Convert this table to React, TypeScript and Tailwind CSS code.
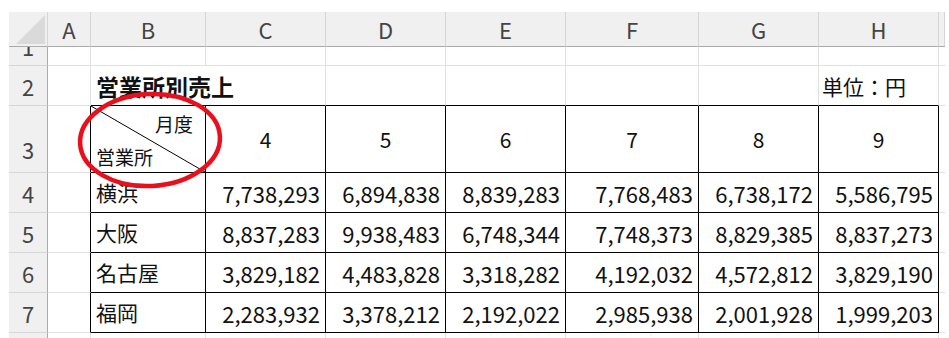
import React from "react";

const font = { fontFamily: '"Noto Sans CJK JP", "Noto Sans", sans-serif' };

const columns = ["A", "B", "C", "D", "E", "F", "G", "H", ""];
const months = ["4", "5", "6", "7", "8", "9"];

const offices: { name: string; values: string[] }[] = [
  { name: "横浜", values: ["7,738,293", "6,894,838", "8,839,283", "7,768,483", "6,738,172", "5,586,795"] },
  { name: "大阪", values: ["8,837,283", "9,938,483", "6,748,344", "7,748,373", "8,829,385", "8,837,273"] },
  { name: "名古屋", values: ["3,829,182", "4,483,828", "3,318,282", "4,192,032", "4,572,812", "3,829,190"] },
  { name: "福岡", values: ["2,283,932", "3,378,212", "2,192,022", "2,985,938", "2,001,928", "1,999,203"] },
];

function ColHeader({ label }: { label: string }) {
  return (
    <div className="flex items-center justify-center bg-[#f0f0f0] border-r border-r-[#d6d6d6] border-b border-b-[#ababab] text-[22px] text-[#444] leading-none">
      {label}
    </div>
  );
}

function RowHeader({ label, bottom }: { label: string; bottom?: boolean }) {
  return (
    <div
      className={`flex justify-center bg-[#f0f0f0] border-r border-r-[#ababab] border-b border-b-[#d6d6d6] text-[22px] text-[#444] leading-none ${
        bottom ? "items-end pb-[12px]" : "items-center"
      }`}
    >
      {label}
    </div>
  );
}

function Blank({ black, right = true }: { black?: "b" | "r" | "br"; right?: boolean }) {
  const r = !right ? "" : black === "r" || black === "br" ? "border-r border-r-black" : "border-r border-r-[#e1e1e1]";
  const b = black === "b" || black === "br" ? "border-b border-b-black" : "border-b border-b-[#e1e1e1]";
  return <div className={`${r} ${b}`} />;
}

export default function App() {
  return (
    <div className="bg-white w-[949px] h-[338px] overflow-hidden pt-[12px] pl-[9px] text-[#111]" style={font}>
      <div className="relative">
        <div className="grid grid-cols-[39px_43px_115px_120px_120px_120px_133px_120px_120px_6px] grid-rows-[35px_19px_40px_67px_40px_40px_40px_40px_5px]">
          {/* column headers */}
          <div className="relative bg-[#f0f0f0] border-r border-r-[#d6d6d6] border-b border-b-[#ababab]">
            <svg className="absolute left-[7px] top-[3px]" width="29" height="29" viewBox="0 0 29 29">
              <polygon points="29,0 29,29 0,29" fill="#dadada" />
            </svg>
          </div>
          {columns.map((c, i) => (
            <ColHeader key={i} label={c} />
          ))}

          {/* row 1 (scrolled, only the lower part shows) */}
          <div className="overflow-hidden bg-[#f0f0f0] border-r border-r-[#ababab] border-b border-b-[#d6d6d6]">
            <div className="h-[40px] -mt-[21px] flex items-center justify-center text-[22px] text-[#444] leading-none">1</div>
          </div>
          {columns.map((_, i) => (
            <Blank key={i} right={i < 8} />
          ))}

          {/* row 2 */}
          <RowHeader label="2" />
          <Blank />
          <div className="col-span-2 flex items-center pl-[5px] pt-[1px] border-r border-r-[#e1e1e1] border-b border-b-black text-[23px] font-bold whitespace-nowrap leading-none">
            営業所別売上
          </div>
          <Blank black="b" />
          <Blank black="b" />
          <Blank black="b" />
          <Blank black="b" />
          <div className="flex items-center pl-[3px] pt-[1px] border-r border-r-[#e1e1e1] border-b border-b-black text-[21px] leading-none whitespace-nowrap">
            単位：円
          </div>
          <Blank right={false} />

          {/* row 3 */}
          <RowHeader label="3" bottom />
          <Blank black="r" />
          <div className="relative flex flex-col justify-between border-r border-r-black border-b border-b-black text-[19px] leading-none pt-[8px] pb-[6px]">
            <svg className="absolute inset-0 w-full h-full" preserveAspectRatio="none" viewBox="0 0 100 100">
              <line x1="0" y1="0" x2="100" y2="100" stroke="#000" strokeWidth="1" vectorEffect="non-scaling-stroke" />
            </svg>
            <span className="self-end pr-[12px]">月度</span>
            <span className="self-start pl-[5px]">営業所</span>
          </div>
          {months.map((m) => (
            <div key={m} className="flex items-center justify-center border-r border-r-black border-b border-b-black text-[21px] leading-none">
              {m}
            </div>
          ))}
          <Blank right={false} />

          {/* data rows */}
          {offices.map((o, r) => (
            <React.Fragment key={o.name}>
              <RowHeader label={String(r + 4)} />
              <Blank black="r" />
              <div className="flex items-center pl-[5px] border-r border-r-black border-b border-b-black text-[21px] leading-none whitespace-nowrap">
                {o.name}
              </div>
              {o.values.map((v, i) => (
                <div key={i} className="flex items-center justify-end pr-[5px] border-r border-r-black border-b border-b-black text-[22px] leading-none">
                  {v}
                </div>
              ))}
              <Blank right={false} />
            </React.Fragment>
          ))}

          {/* row 8 (cut off) */}
          <div className="bg-[#f0f0f0] border-r border-r-[#ababab]" />
          {columns.map((_, i) => (
            <div key={i} className={i < 8 ? "border-r border-r-[#e1e1e1]" : ""} />
          ))}
        </div>

        {/* red ellipse marking the diagonal header cell */}
        <svg className="absolute left-[66px] top-[76px] pointer-events-none" width="150" height="104" viewBox="0 0 150 104">
          <ellipse cx="75" cy="52" rx="70" ry="46" fill="none" stroke="#e8101c" strokeWidth="4.5" transform="rotate(-3 75 52)" />
        </svg>
      </div>
    </div>
  );
}
